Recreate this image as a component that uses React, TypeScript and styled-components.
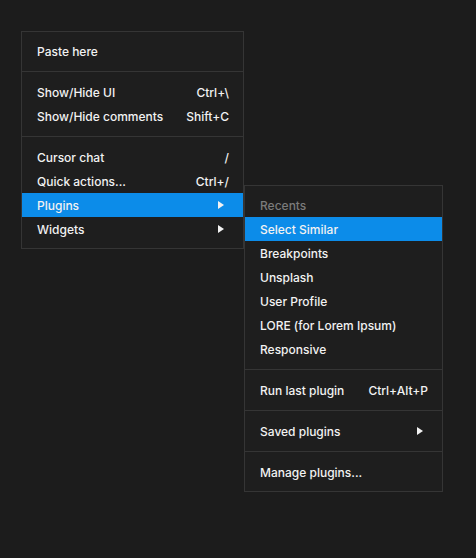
import React from "react";
import styled, { createGlobalStyle } from "styled-components";

const Global = createGlobalStyle`
  html, body {
    margin: 0;
    padding: 0;
    background: #1c1c1c;
    width: 476px;
    height: 558px;
    overflow: hidden;
  }
  body {
    font-family: Inter, "Noto Sans", sans-serif;
    -webkit-font-smoothing: antialiased;
  }
`;

const Stage = styled.div`
  padding: 31px 0 0 21px;
`;

const Menu = styled.div<{ $width: number }>`
  position: relative;
  box-sizing: border-box;
  width: ${(p) => p.$width}px;
  background: #1e1e1e;
  border: 1px solid #353535;
  padding: 7px 0;
  display: flex;
  flex-direction: column;
`;

const SubMenu = styled(Menu)`
  position: absolute;
  top: -8px;
  left: calc(100% + 1px);
  z-index: 2;
`;

const Row = styled.div<{ $active?: boolean; $header?: boolean; $pad: number }>`
  position: relative;
  height: 24px;
  display: flex;
  align-items: center;
  justify-content: space-between;
  padding: 0 ${(p) => p.$pad}px 0 15px;
  font-size: 12px;
  font-weight: 500;
  color: ${(p) => (p.$header ? "#7b7b7b" : "#f2f2f2")};
  background: ${(p) => (p.$active ? "#0c8ce9" : "transparent")};
  white-space: nowrap;
`;

const Shortcut = styled.span`
  color: #f2f2f2;
`;

const Separator = styled.div`
  height: 17px;
  display: flex;
  align-items: center;
  &::after {
    content: "";
    flex: 1;
    height: 1px;
    background: #353535;
  }
`;

const Arrow = () => (
  <svg width="6" height="8" viewBox="0 0 6 8" style={{ display: "block" }}>
    <polygon points="0,0 6,4 0,8" fill="#f2f2f2" />
  </svg>
);

type Item =
  | { kind: "sep" }
  | {
      kind: "item";
      label: string;
      shortcut?: string;
      arrow?: boolean;
      active?: boolean;
      header?: boolean;
      sub?: Item[];
    };

const pluginsSub: Item[] = [
  { kind: "item", label: "Recents", header: true },
  { kind: "item", label: "Select Similar", active: true },
  { kind: "item", label: "Breakpoints" },
  { kind: "item", label: "Unsplash" },
  { kind: "item", label: "User Profile" },
  { kind: "item", label: "LORE (for Lorem Ipsum)" },
  { kind: "item", label: "Responsive" },
  { kind: "sep" },
  { kind: "item", label: "Run last plugin", shortcut: "Ctrl+Alt+P" },
  { kind: "sep" },
  { kind: "item", label: "Saved plugins", arrow: true },
  { kind: "sep" },
  { kind: "item", label: "Manage plugins..." },
];

const mainItems: Item[] = [
  { kind: "item", label: "Paste here" },
  { kind: "sep" },
  { kind: "item", label: "Show/Hide UI", shortcut: "Ctrl+\\" },
  { kind: "item", label: "Show/Hide comments", shortcut: "Shift+C" },
  { kind: "sep" },
  { kind: "item", label: "Cursor chat", shortcut: "/" },
  { kind: "item", label: "Quick actions...", shortcut: "Ctrl+/" },
  { kind: "item", label: "Plugins", arrow: true, active: true, sub: pluginsSub },
  { kind: "item", label: "Widgets", arrow: true },
];

const renderItems = (items: Item[]): React.ReactNode =>
  items.map((it, i) =>
    it.kind === "sep" ? (
      <Separator key={i} />
    ) : (
      <Row key={i} $active={it.active} $header={it.header} $pad={it.arrow ? 19 : 14}>
        <span>{it.label}</span>
        {it.shortcut && <Shortcut>{it.shortcut}</Shortcut>}
        {it.arrow && <Arrow />}
        {it.sub && <SubMenu $width={199}>{renderItems(it.sub)}</SubMenu>}
      </Row>
    )
  );

export default function App() {
  return (
    <>
      <Global />
      <Stage>
        <Menu $width={223}>{renderItems(mainItems)}</Menu>
      </Stage>
    </>
  );
}
